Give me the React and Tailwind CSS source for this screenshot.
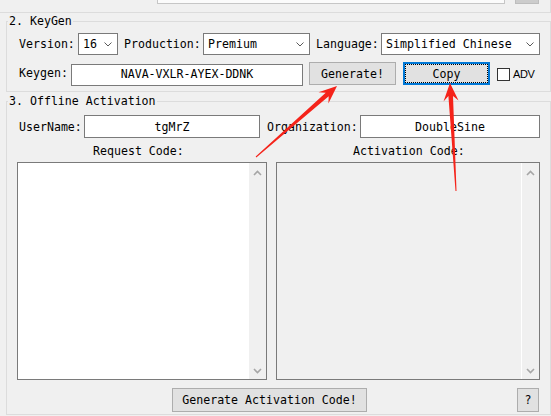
import React from "react";

function Chevron() {
  return (
    <svg width="8" height="5" viewBox="0 0 8 5" className="shrink-0">
      <path d="M0.5 0.5 L4 4 L7.5 0.5" fill="none" stroke="#5a5a5a" strokeWidth="1" />
    </svg>
  );
}

function ScrollChevron({ up }) {
  return (
    <svg width="9" height="6" viewBox="0 0 9 6">
      <path
        d={up ? "M1 5 L4.5 1.5 L8 5" : "M1 1 L4.5 4.5 L8 1"}
        fill="none"
        stroke="#a6a6a6"
        strokeWidth="1.6"
      />
    </svg>
  );
}

function Select({ w, value }) {
  return (
    <div className={`${w} h-[22px] bg-white border border-[#7a7a7a] flex items-center justify-between pl-[4px] pr-[5px]`}>
      <span className="whitespace-nowrap">{value}</span>
      <Chevron />
    </div>
  );
}

function Button({ w, children }) {
  return (
    <div className={`${w} h-[23px] bg-[#e1e1e1] border border-[#adadad] flex items-center justify-center whitespace-nowrap`}>
      {children}
    </div>
  );
}

function arrow(x1, y1, x2, y2) {
  const dx = x2 - x1;
  const dy = y2 - y1;
  const L = Math.hypot(dx, dy);
  const ux = dx / L;
  const uy = dy / L;
  const nx = -uy;
  const ny = ux;
  const at = (d, h) => [x1 + ux * d + nx * h, y1 + uy * d + ny * h];
  const pts = [
    at(0, 0.5),
    at(L - 13, 2.3),
    at(L - 18, 7.5),
    [x2, y2],
    at(L - 18, -7.5),
    at(L - 13, -2.3),
    at(0, -0.5),
  ];
  return pts.map((p) => p[0].toFixed(1) + "," + p[1].toFixed(1)).join(" ");
}

export default function App() {
  return (
    <div className="relative w-[551px] h-[416px] overflow-hidden bg-[#f0f0f0] text-black text-[11.6px] leading-[14px] font-['DejaVu_Sans_Mono',monospace]">
      {/* Section 1 (clipped) */}
      <div className="flex items-start h-[13px] w-[551px] border-b border-r border-[#dcdcdc]">
        <div className="flex items-start -mt-[19px]">
          <div className="ml-[157px] w-[348px] h-[23px] border border-[#c6c6c6] bg-[#fbfbfb]" />
          <div className="ml-[10px] w-[24px] h-[23px] bg-[#cccccc] border border-[#bdbdbd]" />
        </div>
      </div>

      {/* Section 2: KeyGen */}
      <div className="relative mt-[8px] ml-[6px] w-[545px] border border-[#dcdcdc] pt-[11px] pb-[6px] pl-[12px]">
        <span className="absolute -top-[8px] left-[1px] px-[1px] bg-[#f0f0f0]">2. KeyGen</span>
        <div className="flex items-center h-[22px]">
          <span className="w-[59px]">Version:</span>
          <Select w="w-[40px]" value="16" />
          <span className="ml-[6px] w-[79px]">Production:</span>
          <Select w="w-[107px]" value="Premium" />
          <span className="ml-[6px] w-[65px]">Language:</span>
          <Select w="w-[159px]" value="Simplified Chinese" />
        </div>
        <div className="flex items-start mt-[7px] h-[23px]">
          <span className="w-[52px] mt-[4px]">Keygen:</span>
          <div className="w-[232px] h-[22px] mt-[2px] bg-white border border-[#7a7a7a] flex justify-center pt-[2px]">
            NAVA-VXLR-AYEX-DDNK
          </div>
          <div className="ml-[6px]">
            <Button w="w-[87px]">Generate!</Button>
          </div>
          <div className="ml-[7px] w-[87px] h-[23px] bg-[#e1e1e1] border-2 border-[#0078d7] p-0">
            <div className="w-full h-full border border-dotted border-black flex items-center justify-center">Copy</div>
          </div>
          <div className="ml-[7px] mt-[6px] w-[13px] h-[13px] bg-white border border-[#333333]" />
          <span className="ml-[3px] mt-[5px] text-[11px] tracking-[-0.4px] font-['Liberation_Sans',sans-serif]">ADV</span>
        </div>
      </div>

      {/* Section 3: Offline Activation */}
      <div className="relative mt-[9px] ml-[6px] w-[545px] border border-[#dcdcdc] pt-[13px] pb-[2px] pl-[10px]">
        <span className="absolute -top-[8px] left-[1px] px-[1px] bg-[#f0f0f0]">3. Offline Activation</span>
        <div className="flex items-center h-[23px]">
          <span className="ml-[2px] w-[65px]">UserName:</span>
          <div className="w-[176px] h-[23px] bg-white border border-[#7a7a7a] flex items-center justify-center">tgMrZ</div>
          <span className="ml-[7px] w-[93px]">Organization:</span>
          <div className="w-[180px] h-[23px] bg-white border border-[#7a7a7a] flex items-center justify-center">DoubleSine</div>
        </div>
        <div className="flex mt-[6px] h-[14px]">
          <div className="w-[250px] pl-[76px]">Request Code:</div>
          <div className="ml-[9px] w-[264px] pl-[77px]">Activation Code:</div>
        </div>
        <div className="flex mt-[4px]">
          <div className="w-[250px] h-[218px] bg-white border border-[#7a7a7a] flex justify-end">
            <div className="w-[17px] h-full bg-[#f0f0f0] flex flex-col items-center justify-between pt-[7px] pb-[5px]">
              <ScrollChevron up />
              <ScrollChevron />
            </div>
          </div>
          <div className="ml-[9px] w-[264px] h-[218px] bg-[#f0f0f0] border border-[#7a7a7a] flex justify-end">
            <div className="w-[18px] h-full bg-[#f0f0f0] border-l border-white flex flex-col items-center justify-between pt-[7px] pb-[5px]">
              <ScrollChevron up />
              <ScrollChevron />
            </div>
          </div>
        </div>
        <div className="flex mt-[8px] h-[24px]">
          <div className="ml-[155px] w-[195px] h-[24px] bg-[#e1e1e1] border border-[#adadad] flex items-center justify-center">
            Generate Activation Code!
          </div>
          <div className="ml-[150px] w-[22px] h-[24px] bg-[#e1e1e1] border border-[#adadad] flex items-center justify-center">?</div>
        </div>
      </div>

      {/* Annotation arrows */}
      <svg className="absolute inset-0 pointer-events-none" width="551" height="416" viewBox="0 0 551 416">
        <polygon points={arrow(256, 157, 337, 86)} fill="#f5231a" />
        <polygon points={arrow(456, 191, 450, 83)} fill="#f5231a" />
      </svg>
    </div>
  );
}
